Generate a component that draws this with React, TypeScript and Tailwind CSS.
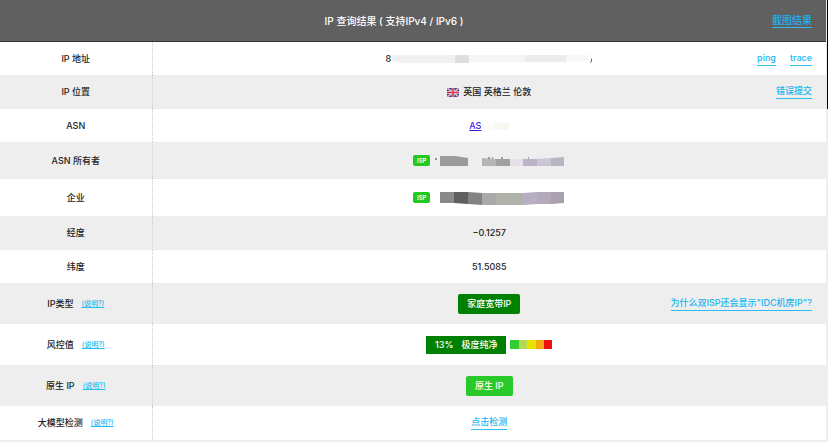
import type { ReactNode } from "react";

type Row = {
  label: string;
  height: string;
  hint?: boolean;
  value: ReactNode;
  actions?: string[];
};

const RISK_COLORS = ["bg-[#32cd32]", "bg-[#b4d850]", "bg-[#e4e400]", "bg-[#f5a914]", "bg-[#f01010]"];

function ActionLink({ children }: { children: ReactNode }) {
  return (
    <a href="#" className="border-b border-[#2fbcf3] pb-px text-[#18b6f2]">
      {children}
    </a>
  );
}

function IspTag() {
  return (
    <span className="rounded-xs bg-[#22c922] px-1 text-[6px] leading-[11px] font-semibold text-white">ISP</span>
  );
}

function UkFlag() {
  return (
    <svg viewBox="0 0 12 9" className="h-[9px] w-3" aria-label="UK">
      <rect width="12" height="9" rx="1" fill="#283e88" />
      <path d="M0 0l12 9M12 0L0 9" stroke="#fff" strokeWidth="1.5" />
      <path d="M0 0l12 9M12 0L0 9" stroke="#d5304a" strokeWidth="0.6" />
      <path d="M6 0v9M0 4.5h12" stroke="#fff" strokeWidth="2.6" />
      <path d="M6 0v9M0 4.5h12" stroke="#d5304a" strokeWidth="1.6" />
    </svg>
  );
}

// Pixelated strips that hide the private parts of a result
function MaskedAddress() {
  return (
    <svg viewBox="0 0 202 10" className="h-[10px] w-[202px]" aria-hidden="true">
      <path d="M1 1h63v8H12L1 7z" fill="#f1f1f1" />
      <rect x="64" y="1" width="14" height="8" fill="#dedede" />
      <rect x="78" y="1" width="56" height="7" fill="#f5f5f5" />
      <rect x="134" y="1" width="41" height="7" fill="#ececec" />
      <path d="M175 1h22v5l-22 2z" fill="#f7f7f7" />
      <path d="M200.500 4.500v3l-1.500 1" stroke="#666" fill="none" />
    </svg>
  );
}

function MaskedOwner() {
  return (
    <svg viewBox="0 0 135 12" className="h-3 w-[135px]" aria-hidden="true">
      <path d="M5.500 3l1 2" stroke="#333" />
      <path d="M10 1h15l13 2v8H10z" fill="#9b9b9b" />
      <path d="M52 3l14 1v7H52z" fill="#b5b5b5" />
      <path d="M66 4h14v7H66z" fill="#a0a2a0" />
      <path d="M80 4h13v7H80z" fill="#e4e1e8" />
      <path d="M93 4h14v7H93z" fill="#bcb3c8" />
      <path d="M107 4l14-1v8h-14z" fill="#c9c6d3" />
      <path d="M121 3l13-1v9h-13z" fill="#b9b4c2" />
      <path d="M58 3h2M62 3h1M71 3h2M98 3h1" stroke="#555" />
    </svg>
  );
}

function MaskedCompany() {
  return (
    <svg viewBox="0 0 135 14" className="h-[14px] w-[135px]" aria-hidden="true">
      <path d="M10 1h14v11H10z" fill="#8a8a8a" />
      <path d="M24 1h14v12l-14-1z" fill="#606060" />
      <path d="M38 1l14 1v12l-14-1z" fill="#838383" />
      <path d="M52 2h14v12H52z" fill="#a9a9a9" />
      <path d="M66 2h27v12H66z" fill="#b0b3aa" />
      <path d="M93 2l14-1v12l-14 1z" fill="#b8aec3" />
      <path d="M107 1h14v12h-14z" fill="#b3aaba" />
      <path d="M121 1h13v11l-13 1z" fill="#aaa1b0" />
    </svg>
  );
}

const ROWS: Row[] = [
  {
    label: "IP 地址",
    height: "h-[33px]",
    value: (
      <>
        <span>8</span>
        <MaskedAddress />
      </>
    ),
    actions: ["ping", "trace"],
  },
  {
    label: "IP 位置",
    height: "h-[34px]",
    value: (
      <>
        <UkFlag />
        <span className="ml-1">英国 英格兰 伦敦</span>
      </>
    ),
    actions: ["错误提交"],
  },
  {
    label: "ASN",
    height: "h-[33px]",
    value: (
      <>
        <a href="#" className="text-[#3b22e0] underline">AS</a>
        <svg viewBox="0 0 28 8" className="h-2 w-7" aria-hidden="true">
          <rect x="0" y="1" width="13" height="7" fill="#fcfcfc" />
          <rect x="13" y="1" width="15" height="7" fill="#f8f8f3" />
        </svg>
      </>
    ),
  },
  {
    label: "ASN 所有者",
    height: "h-[37px]",
    value: (
      <>
        <IspTag />
        <MaskedOwner />
      </>
    ),
  },
  {
    label: "企业",
    height: "h-[37px]",
    value: (
      <>
        <IspTag />
        <MaskedCompany />
      </>
    ),
  },
  { label: "经度", height: "h-[34px]", value: "−0.1257" },
  { label: "纬度", height: "h-[33px]", value: "51.5085" },
  {
    label: "IP类型",
    height: "h-[41px]",
    hint: true,
    value: <span className="rounded-xs bg-[#008000] px-[9px] leading-5 text-white">家庭宽带IP</span>,
    actions: ['为什么双ISP还会显示"IDC机房IP"?'],
  },
  {
    label: "风控值",
    height: "h-[41px]",
    hint: true,
    value: (
      <>
        <span className="flex gap-2 bg-[#008000] px-[9px] leading-[18px] text-white">
          <span>13%</span>
          <span>极度纯净</span>
        </span>
        <span className="ml-1 flex w-[42px]">
          {RISK_COLORS.map((color) => (
            <span key={color} className={`h-[9px] flex-1 ${color}`} />
          ))}
        </span>
      </>
    ),
  },
  {
    label: "原生 IP",
    height: "h-[41px]",
    hint: true,
    value: <span className="rounded-xs bg-[#2ac92a] px-[9px] leading-5 text-white">原生 IP</span>,
  },
  {
    label: "大模型检测",
    height: "h-[34px]",
    hint: true,
    value: <ActionLink>点击检测</ActionLink>,
  },
];

export default function App() {
  return (
    <div className="relative bg-[#eeeeee] pr-[2px] pb-[2px] font-['Inter','Noto_Sans_CJK_SC',sans-serif] text-[9px] leading-3 font-medium text-[#222]">
      <table className="w-full table-fixed border-collapse">
        <colgroup>
          <col className="w-[152px]" />
          <col />
        </colgroup>
        <thead>
          <tr className="h-[42px] bg-[#606060] text-[10px] text-white shadow-[inset_0_-1px_0_#333]">
            <th colSpan={2} className="p-0 pr-[14px] font-medium">
              <div className="flex items-center">
                <span className="flex-1 pl-4 text-center">IP 查询结果 ( 支持IPv4 / IPv6 )</span>
                <ActionLink>截图结果</ActionLink>
              </div>
            </th>
          </tr>
        </thead>
        <tbody>
          {ROWS.map((row) => (
            <tr key={row.label} className={`bg-white even:bg-[#eeeeee] ${row.height}`}>
              <th scope="row" className="border-r border-dotted border-[#ccc] p-0 font-medium">
                <div className="flex items-center justify-center gap-2">
                  <span>{row.label}</span>
                  {row.hint && (
                    <a href="#" className="text-[7px] text-[#22bdf2] underline">(说明?)</a>
                  )}
                </div>
              </th>
              <td className="p-0">
                <div className="grid grid-cols-[1fr_auto_1fr] items-center">
                  <div className="col-start-2 flex items-center">{row.value}</div>
                  {row.actions && (
                    <div className="flex justify-end gap-[14px] pr-[14px] whitespace-nowrap">
                      {row.actions.map((action) => (
                        <ActionLink key={action}>{action}</ActionLink>
                      ))}
                    </div>
                  )}
                </div>
              </td>
            </tr>
          ))}
        </tbody>
      </table>
      {/* Scroll thumb */}
      <div className="absolute top-0 right-0 h-[109px] w-px bg-black" />
    </div>
  );
}
